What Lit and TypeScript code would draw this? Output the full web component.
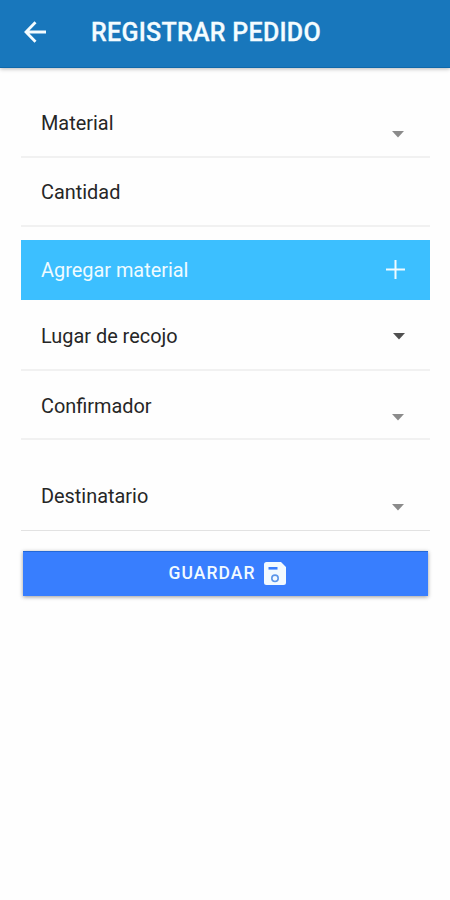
import { LitElement, html, css } from "lit";
import { customElement, property } from "lit/decorators.js";

@customElement("form-row")
class FormRow extends LitElement {
  @property() label = "";
  @property() caret = "";

  static styles = css`
    :host {
      display: flex;
      justify-content: space-between;
      align-items: flex-start;
      box-sizing: border-box;
      padding: 0 26px 0 20px;
      border-bottom: 2px solid #f1f1f1;
      color: #262626;
    }
    .label {
      font-size: 19.9px;
      line-height: 26px;
    }
    .caret {
      display: block;
      width: 12px;
      height: 7px;
      margin-top: 20px;
      fill: #8b8b8b;
    }
    .caret.dark {
      fill: #505050;
      margin-top: 9px;
      margin-right: -1px;
    }
  `;

  render() {
    return html`
      <span class="label">${this.label}</span>
      ${this.caret
        ? html`<svg class="caret ${this.caret}" viewBox="0 0 12 7"><path d="M0 0h12L6 6.5z" /></svg>`
        : null}
    `;
  }
}

@customElement("app-root")
class AppRoot extends LitElement {
  static styles = css`
    :host {
      display: block;
      height: 900px;
      background: #fefefe;
      font-family: Roboto, sans-serif;
      overflow: hidden;
    }
    .bar {
      display: flex;
      align-items: center;
      box-sizing: border-box;
      height: 68px;
      padding: 0 0 1px 24px;
      background: #1877bc;
      border-bottom: 1px solid #0f68aa;
      box-shadow: 0 1px 4px rgba(0, 0, 0, 0.28);
      color: #f4fcff;
    }
    .back {
      width: 23px;
      height: 22px;
      margin-right: 44px;
      margin-top: -2px;
    }
    .title {
      margin: 0;
      font-size: 25px;
      font-weight: 500;
      line-height: 30px;
      letter-spacing: 0.27px;
      -webkit-text-stroke: 0.3px currentColor;
    }
    .form {
      display: flex;
      flex-direction: column;
      padding: 0 20px;
    }
    .row {
      margin-left: 1px;
    }
    .r1 { height: 47px; margin-top: 43px; }
    .r2 { height: 47px; margin-top: 22px; }
    .r3 { height: 47px; margin-top: 24px; }
    .r4 { height: 46px; margin-top: 23px; }
    .r5 { height: 47px; margin-top: 44px; border-bottom: 1px solid #e2e2e2; }
    .add {
      display: flex;
      align-items: center;
      justify-content: space-between;
      box-sizing: border-box;
      height: 60px;
      margin: 13px 0 0 1px;
      padding: 0 25px 1px 20px;
      background: #3cbfff;
      color: #effbff;
      font-size: 19.9px;
    }
    .add-label {
      padding-top: 2px;
    }
    .plus {
      width: 19px;
      height: 19px;
    }
    .save {
      display: flex;
      align-items: center;
      justify-content: center;
      gap: 8px;
      box-sizing: border-box;
      height: 45px;
      margin: 20px 2px 0 3px;
      padding: 0 0 1px 3px;
      border: 0;
      background: #387efe;
      box-shadow: 0 1px 4px rgba(0, 0, 0, 0.4), inset 0 1px 0 #2468d6;
      color: #f2faff;
      font: 500 17.5px/20px Roboto, sans-serif;
      letter-spacing: 1.05px;
    }
    .disk {
      width: 22px;
      height: 23px;
    }
  `;

  render() {
    return html`
      <header class="bar">
        <svg class="back" viewBox="0 0 23 22" fill="none" stroke="currentColor" stroke-width="2.8">
          <path d="M22 11H2.5M11.5 1.2L2 11l9.5 9.8" />
        </svg>
        <h1 class="title">REGISTRAR PEDIDO</h1>
      </header>
      <main class="form">
        <form-row class="row r1" label="Material" caret="light"></form-row>
        <form-row class="row r2" label="Cantidad"></form-row>
        <div class="add">
          <span class="add-label">Agregar material</span>
          <svg class="plus" viewBox="0 0 19 19" fill="none" stroke="currentColor" stroke-width="2">
            <path d="M9.5 0v19M0 9.5h19" />
          </svg>
        </div>
        <form-row class="row r3" label="Lugar de recojo" caret="dark"></form-row>
        <form-row class="row r4" label="Confirmador" caret="light"></form-row>
        <form-row class="row r5" label="Destinatario" caret="light"></form-row>
        <button class="save">
          <span>GUARDAR</span>
          <svg class="disk" viewBox="0 0 22 23">
            <path fill="currentColor" d="M2.5 0H17l5 5v15.5a2.5 2.5 0 0 1-2.5 2.5h-17A2.5 2.5 0 0 1 0 20.5v-18A2.5 2.5 0 0 1 2.5 0z" />
            <path fill="#387efe" d="M4.5 5h9v2.6h-9z" />
            <circle cx="11" cy="16.3" r="3.2" fill="none" stroke="#5b96ea" stroke-width="1.6" />
          </svg>
        </button>
      </main>
    `;
  }
}
